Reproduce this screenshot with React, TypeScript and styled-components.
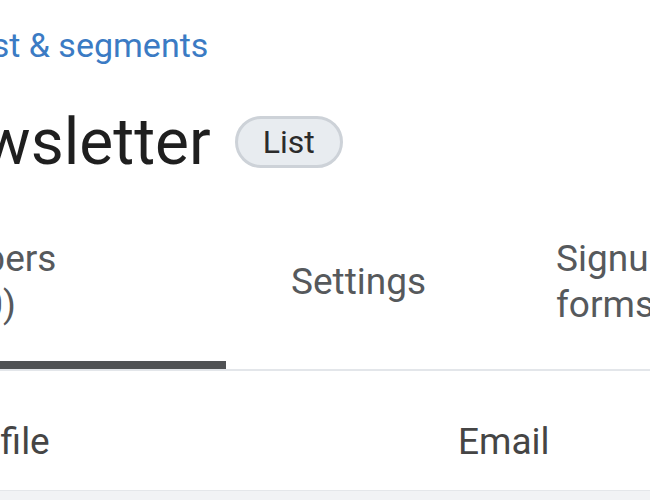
import React from "react";
import styled, { createGlobalStyle } from "styled-components";

const GlobalStyle = createGlobalStyle`
  html, body { margin: 0; padding: 0; background: #ffffff; }
  body { font-family: Roboto, "Liberation Sans", Arial, sans-serif; }
`;

const Viewport = styled.div`
  width: 650px;
  height: 500px;
  overflow: hidden;
  background: #ffffff;
`;

const Content = styled.div`
  margin-left: -97px;
  width: 900px;
  padding-top: 23px;
`;

const Breadcrumb = styled.a`
  display: block;
  margin-left: 25px;
  font-size: 34px;
  line-height: 44px;
  color: #3b7bc4;
  text-decoration: none;
  white-space: nowrap;
`;

const TitleRow = styled.div`
  display: flex;
  align-items: center;
  gap: 24px;
  margin-top: 37px;
`;

const Title = styled.h1`
  margin: 0;
  font-size: 64px;
  font-weight: 400;
  line-height: 77px;
  color: #1f1f1f;
  white-space: nowrap;
`;

const Pill = styled.span`
  display: inline-flex;
  align-items: center;
  height: 46px;
  margin-bottom: 2px;
  padding: 0 25px;
  border: 3px solid #cdd2d8;
  border-radius: 999px;
  background: #e8ecf0;
  font-size: 32px;
  color: #2b2b2b;
`;

const TabList = styled.div`
  display: flex;
  margin-top: 12px;
  margin-left: -3px;
  border-bottom: 2px solid #e3e6ea;
`;

const Tab = styled.div<{ $width?: number; $active?: boolean }>`
  flex: none;
  box-sizing: border-box;
  width: ${(p) => (p.$width ? `${p.$width}px` : "auto")};
  padding: 43px 65px 41px;
  display: flex;
  align-items: center;
  font-size: 37px;
  line-height: 46px;
  color: #56595c;
  box-shadow: ${(p) => (p.$active ? "inset 0 -8px 0 #505254" : "none")};
  &:first-child {
    padding-left: 0;
  }
`;

const TabLabel = styled.span`
  display: block;
  white-space: nowrap;
`;

const HeaderRow = styled.div`
  display: grid;
  grid-template-columns: 514px 1fr;
  padding: 48px 0 25px;
`;

const HeaderCell = styled.div`
  padding: 0 41px;
  font-size: 37px;
  line-height: 46px;
  color: #454545;
  white-space: nowrap;
`;

const BodyRow = styled.div`
  height: 40px;
  background: #f1f3f5;
  border-top: 1px solid #e4e7ea;
`;

export default function App() {
  return (
    <>
      <GlobalStyle />
      <Viewport>
        <Content>
          <Breadcrumb href="#">All list &amp; segments</Breadcrumb>
          <TitleRow>
            <Title>Newsletter</Title>
            <Pill>List</Pill>
          </TitleRow>
          <TabList>
            <Tab $width={326} $active>
              <div>
                <TabLabel>Members</TabLabel>
                <TabLabel>(1,000)</TabLabel>
              </div>
            </Tab>
            <Tab $width={265}>
              <TabLabel>Settings</TabLabel>
            </Tab>
            <Tab $width={265}>
              <div>
                <TabLabel>Signup</TabLabel>
                <TabLabel>forms</TabLabel>
              </div>
            </Tab>
          </TabList>
          <HeaderRow>
            <HeaderCell>Profile</HeaderCell>
            <HeaderCell>Email</HeaderCell>
          </HeaderRow>
          <BodyRow />
        </Content>
      </Viewport>
    </>
  );
}
